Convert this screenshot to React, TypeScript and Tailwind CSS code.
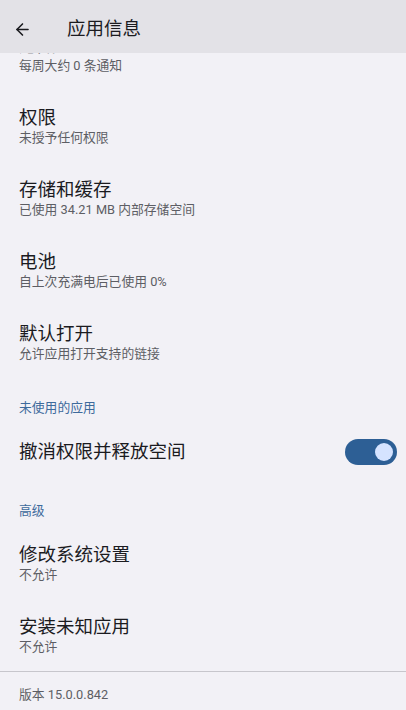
import { ArrowLeft } from 'lucide-react';

type Item = { title: string; summary: string };

const appItems: Item[] = [
  { title: '通知', summary: '每周大约 0 条通知' },
  { title: '权限', summary: '未授予任何权限' },
  { title: '存储和缓存', summary: '已使用 34.21 MB 内部存储空间' },
  { title: '电池', summary: '自上次充满电后已使用 0%' },
  { title: '默认打开', summary: '允许应用打开支持的链接' },
];

const advancedItems: Item[] = [
  { title: '修改系统设置', summary: '不允许' },
  { title: '安装未知应用', summary: '不允许' },
];

function PrefRow({ item, className = '' }: { item: Item; className?: string }) {
  return (
    <div className={`flex h-[72px] shrink-0 flex-col px-[19px] pt-[16px] ${className}`}>
      <span className="text-[18.5px] leading-[24px] text-[#1b1b1f]">{item.title}</span>
      <span className="text-[12.8px] leading-[16px] text-[#5d5e64]">{item.summary}</span>
    </div>
  );
}

function SectionHeader({ label, className = '' }: { label: string; className?: string }) {
  return (
    <div className={`px-[19px] pb-[7px] text-[12.8px] leading-[18px] text-[#3d6a9c] ${className}`}>
      {label}
    </div>
  );
}

export default function App() {
  return (
    <div
      className="flex h-[710px] w-[406px] flex-col overflow-hidden bg-[#f2f1f6]"
      style={{ fontFamily: 'Roboto, "Noto Sans CJK SC", sans-serif' }}
    >
      <header className="relative z-10 flex h-[53px] shrink-0 items-center bg-[#e3e2e7] pt-[6px]">
        <button type="button" className="ml-[12px] flex h-[20px] w-[20px] items-center justify-center text-[#1b1b1f]">
          <ArrowLeft className="h-[19px] w-[19px]" strokeWidth={2} />
        </button>
        <h1 className="ml-[35px] text-[18.5px] text-[#1b1b1f]">应用信息</h1>
      </header>

      <div className="flex min-h-0 flex-1 flex-col overflow-hidden">
        {appItems.map((item, i) => (
          <PrefRow key={item.title} item={item} className={i === 0 ? '-mt-[35px]' : ''} />
        ))}

        <SectionHeader label="未使用的应用" className="pt-[21px]" />
        <div className="flex h-[56px] shrink-0 items-center justify-between px-[19px]">
          <span className="text-[18.5px] leading-[24px] text-[#1b1b1f]">撤消权限并释放空间</span>
          <div className="mr-[-10px] flex h-[26px] w-[52px] items-center justify-end rounded-full bg-[#2d5f95] pr-[4px]">
            <span className="h-[18px] w-[18px] rounded-full bg-[#d5e3ff]" />
          </div>
        </div>

        <SectionHeader label="高级" className="pt-[22px]" />
        {advancedItems.map((item) => (
          <PrefRow key={item.title} item={item} />
        ))}

        <div className="border-t border-[#c7c6cc]" />
        <div className="px-[19px] pt-[14px] text-[12.8px] leading-[18px] text-[#5d5e64]">版本 15.0.0.842</div>
      </div>
    </div>
  );
}
